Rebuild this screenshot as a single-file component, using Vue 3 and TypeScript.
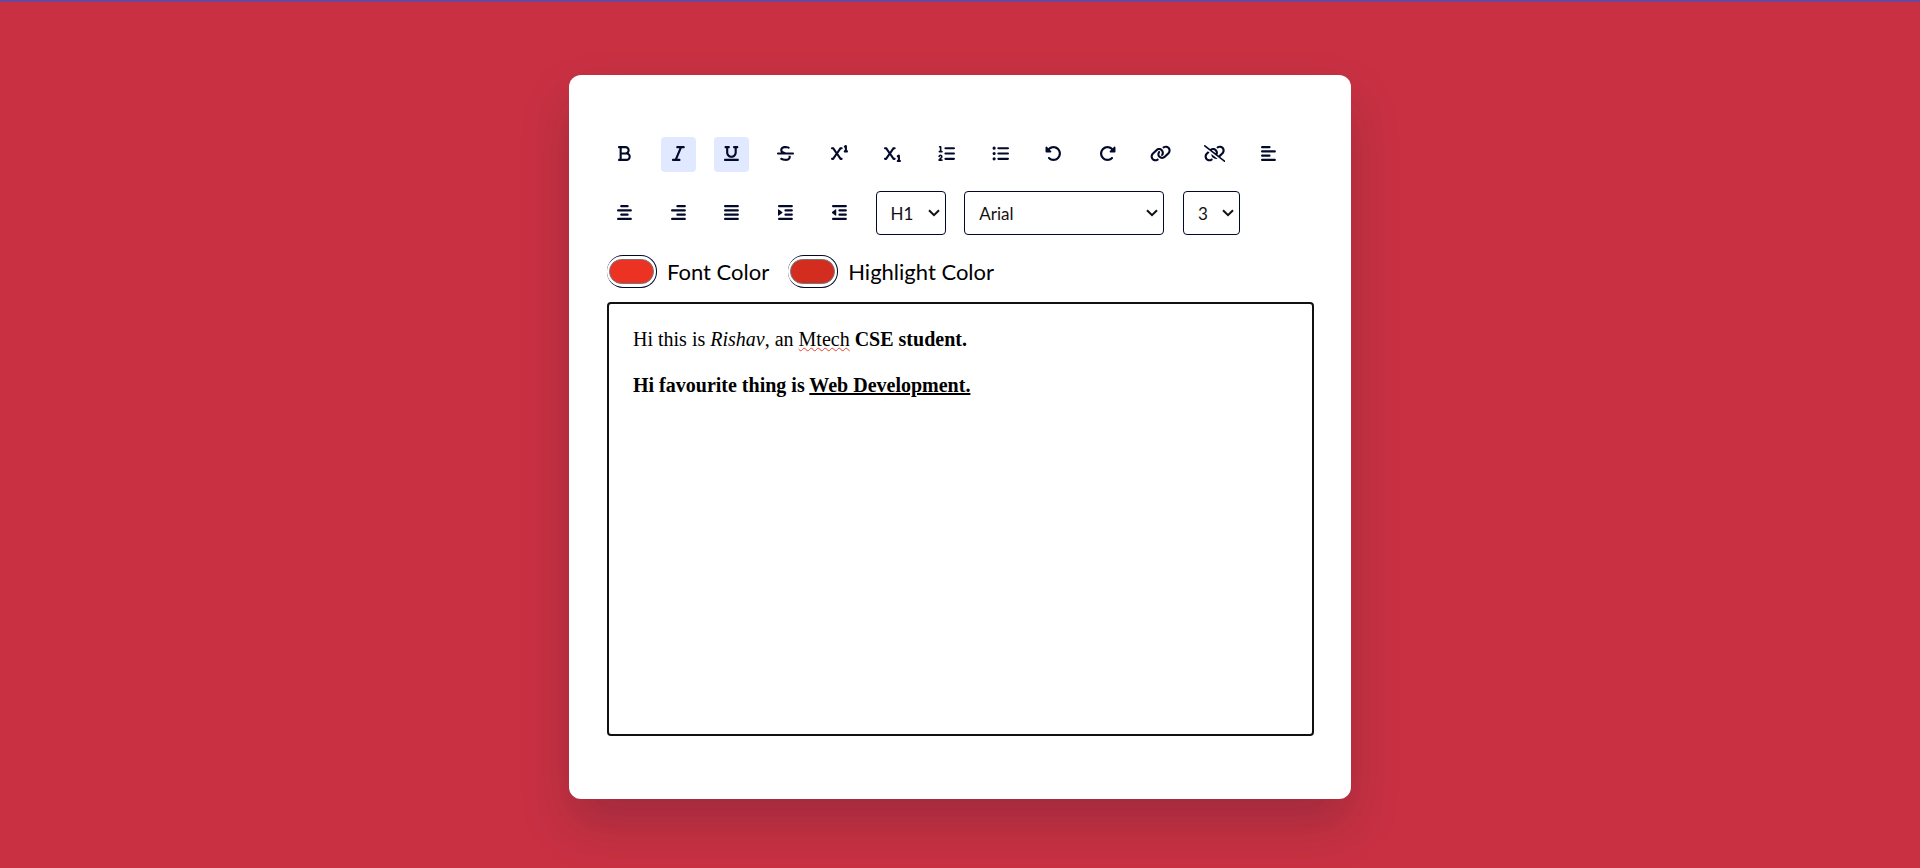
<script setup lang="ts">
import { ref } from 'vue'

interface Tool {
  id: string
  label: string
  width: number
  path: string
  flip?: boolean
}

const crossLetter =
  'M32 64C14.3 64 0 78.3 0 96s14.3 32 32 32H47.3l89.6 128L47.3 384H32c-17.7 0-32 14.3-32 32s14.3 32 32 32H64c10.4 0 20.2-5.1 26.2-13.6L176 311.8l85.8 122.6c6 8.6 15.8 13.6 26.2 13.6h32c17.7 0 32-14.3 32-32s-14.3-32-32-32H304.7L215.1 256l89.6-128H320c17.7 0 32-14.3 32-32s-14.3-32-32-32H288c-10.4 0-20.2 5.1-26.2 13.6L176 200.2 90.2 77.6C84.2 69.1 74.4 64 64 64H32z'
const smallOne =
  'c0-11.1-5.7-21.4-15.2-27.2s-21.2-6.4-31.1-1.4l-32 16c-15.8 7.9-22.2 27.1-14.3 42.9C393 '
const rotate =
  'M48.5 224H40c-13.3 0-24-10.7-24-24V72c0-9.7 5.8-18.5 14.8-22.2s19.3-1.7 26.2 5.2L98.6 96.6c87.6-86.5 228.7-86.2 315.8 1c87.5 87.5 87.5 229.3 0 316.8s-229.3 87.5-316.8 0c-12.5-12.5-12.5-32.8 0-45.3s32.8-12.5 45.3 0c62.5 62.5 163.8 62.5 226.3 0s62.5-163.8 0-226.3c-62.2-62.2-162.7-62.5-225.3-1L185 183c6.9 6.9 8.9 17.2 5.2 26.2s-12.5 14.8-22.2 14.8H48.5z'

// Rounded horizontal bar, 64 units thick, starting at (x, y)
const bar = (x: number, y: number, w: number): string =>
  `M${x + 32} ${y}h${w - 64}a32 32 0 0 1 0 64h-${w - 64}a32 32 0 0 1 0-64z`
const dot = (y: number): string => `M64 ${y - 48}a48 48 0 1 0 0 96a48 48 0 1 0 0-96z`
const listBars = bar(160, 64, 352) + bar(160, 224, 352) + bar(160, 384, 352)
const indentBars = bar(0, 32, 448) + bar(192, 160, 256) + bar(192, 288, 256) + bar(0, 416, 448)

const firstRow: Tool[] = [
  {
    id: 'bold',
    label: 'Bold',
    width: 384,
    path: 'M0 64C0 46.3 14.3 32 32 32H80 96 224c70.7 0 128 57.3 128 128c0 31.3-11.3 60.1-30 82.3c37.1 22.4 62 63.1 62 109.7c0 70.7-57.3 128-128 128H96 80 32c-17.7 0-32-14.3-32-32s14.3-32 32-32H48V256 96H32C14.3 96 0 81.7 0 64zM224 224c35.3 0 64-28.7 64-64s-28.7-64-64-64H112V224H224zM112 288V416H256c35.3 0 64-28.7 64-64s-28.7-64-64-64H224 112z'
  },
  {
    id: 'italic',
    label: 'Italic',
    width: 384,
    path: 'M128 64c0-17.7 14.3-32 32-32H352c17.7 0 32 14.3 32 32s-14.3 32-32 32H293.3L160 416h64c17.7 0 32 14.3 32 32s-14.3 32-32 32H32c-17.7 0-32-14.3-32-32s14.3-32 32-32H90.7L224 96H160c-17.7 0-32-14.3-32-32z'
  },
  {
    id: 'underline',
    label: 'Underline',
    width: 448,
    path: 'M16 64c0-17.7 14.3-32 32-32h96c17.7 0 32 14.3 32 32s-14.3 32-32 32H128V224c0 53 43 96 96 96s96-43 96-96V96H304c-17.7 0-32-14.3-32-32s14.3-32 32-32h96c17.7 0 32 14.3 32 32s-14.3 32-32 32H384V224c0 88.4-71.6 160-160 160s-160-71.6-160-160V96H48C30.3 96 16 81.7 16 64zM0 448c0-17.7 14.3-32 32-32H416c17.7 0 32 14.3 32 32s-14.3 32-32 32H32c-17.7 0-32-14.3-32-32z'
  },
  {
    id: 'strikethrough',
    label: 'Strikethrough',
    width: 512,
    path: 'M161.3 144c3.2-17.2 14-30.1 33.7-38.6c21.1-9 51.8-12.3 88.6-6.5c11.9 1.9 48.8 9.1 60.1 12c17.1 4.5 34.6-5.6 39.2-22.7s-5.6-34.6-22.7-39.2c-14.3-3.8-53.6-11.4-66.6-13.4c-44.7-7-88.3-4.2-123.7 10.9c-36.5 15.6-64.4 44.8-71.8 87.3c-.1 .6-.2 1.1-.2 1.7c-2.8 23.9 .5 45.6 10.1 64.6c4.5 9 10.2 16.9 16.7 23.9H32c-17.7 0-32 14.3-32 32s14.3 32 32 32H480c17.7 0 32-14.3 32-32s-14.3-32-32-32H270.1c-.1 0-.3-.1-.4-.1l-1.1-.3c-36-10.8-65.2-19.6-85.2-33.1c-9.3-6.3-15-12.6-18.2-19.1c-3.1-6.1-5.2-14.6-3.8-27.4zM348.9 337.2c2.7 6.5 4.4 15.8 1.9 30.1c-3 17.6-13.8 30.8-33.9 39.4c-21.1 9-51.7 12.3-88.5 6.5c-18-2.9-49.1-13.5-74.4-22.1c-5.6-1.9-11-3.7-15.9-5.4c-16.8-5.6-34.9 3.5-40.5 20.3s3.5 34.9 20.3 40.5c3.6 1.2 7.9 2.7 12.7 4.3c24.9 8.5 63.6 21.7 87.6 25.6l.2 0c44.7 7 88.3 4.2 123.7-10.9c36.5-15.6 64.4-44.8 71.8-87.3c3.6-21 2.7-40.4-3.1-58.1H335.1c7 5.6 11.4 11.2 13.9 17.2z'
  },
  {
    id: 'superscript',
    label: 'Superscript',
    width: 512,
    path: `M480 32${smallOne}73.5 404.3 80 416 80v80c-17.7 0-32 14.3-32 32s14.3 32 32 32h64c17.7 0 32-14.3 32-32s-14.3-32-32-32V32z${crossLetter}`
  },
  {
    id: 'subscript',
    label: 'Subscript',
    width: 512,
    path: `M480 320${smallOne}361.5 404.3 368 416 368v80c-17.7 0-32 14.3-32 32s14.3 32 32 32h64c17.7 0 32-14.3 32-32s-14.3-32-32-32V320z${crossLetter}`
  },
  {
    id: 'ordered',
    label: 'Ordered list',
    width: 512,
    path:
      'M24 56c0-13.3 10.7-24 24-24H80c13.3 0 24 10.7 24 24V176h16c13.3 0 24 10.7 24 24s-10.7 24-24 24H40c-13.3 0-24-10.7-24-24s10.7-24 24-24H56V80H48C34.7 80 24 69.3 24 56zM86.7 341.2c-6.5-7.4-18.3-6.9-24 1.2L51.5 357.9c-7.7 10.8-22.7 13.3-33.5 5.6s-13.3-22.7-5.6-33.5l11.1-15.6c23.7-33.2 72.3-35.6 99.2-4.9c21.3 24.4 20.8 60.9-1.1 84.7L86.8 432H120c13.3 0 24 10.7 24 24s-10.7 24-24 24H32c-9.5 0-18.2-5.6-22-14.4s-2.1-18.9 4.3-25.9l72-78c5.3-5.8 5.4-14.6 .3-20.5z' +
      bar(192, 64, 320) +
      bar(192, 224, 320) +
      bar(192, 384, 320)
  },
  { id: 'unordered', label: 'Unordered list', width: 512, path: dot(96) + dot(256) + dot(416) + listBars },
  { id: 'undo', label: 'Undo', width: 512, path: rotate },
  { id: 'redo', label: 'Redo', width: 512, path: rotate, flip: true },
  {
    id: 'link',
    label: 'Create link',
    width: 640,
    path: 'M579.8 267.7c56.5-56.5 56.5-148 0-204.5c-50-50-128.8-56.5-186.3-15.4l-1.6 1.1c-14.4 10.3-17.7 30.3-7.4 44.6s30.3 17.7 44.6 7.4l1.6-1.1c32.1-22.9 76-19.3 103.8 8.6c31.5 31.5 31.5 82.5 0 114L422.3 334.8c-31.5 31.5-82.5 31.5-114 0c-27.9-27.9-31.5-71.8-8.6-103.8l1.1-1.6c10.3-14.4 6.9-34.4-7.4-44.6s-34.4-6.9-44.6 7.4l-1.1 1.6C206.5 251.2 213 330 263 380c56.5 56.5 148 56.5 204.5 0L579.8 267.7zM60.2 244.3c-56.5 56.5-56.5 148 0 204.5c50 50 128.8 56.5 186.3 15.4l1.6-1.1c14.4-10.3 17.7-30.3 7.4-44.6s-30.3-17.7-44.6-7.4l-1.6 1.1c-32.1 22.9-76 19.3-103.8-8.6C74 372 74 321 105.5 289.5L217.7 177.2c31.5-31.5 82.5-31.5 114 0c27.9 27.9 31.5 71.8 8.6 103.9l-1.1 1.6c-10.3 14.4-6.9 34.4 7.4 44.6s34.4 6.9 44.6-7.4l1.1-1.6C433.5 260.8 427 182 377 132c-56.5-56.5-148-56.5-204.5 0L60.2 244.3z'
  },
  {
    id: 'unlink',
    label: 'Remove link',
    width: 640,
    path: 'M38.8 5.1C28.4-3.1 13.3-1.2 5.1 9.2S-1.2 34.7 9.2 42.9l592 464c10.4 8.2 25.5 6.3 33.7-4.1s6.3-25.5-4.1-33.7L489.3 358.2l90.5-90.5c56.5-56.5 56.5-148 0-204.5c-50-50-128.8-56.5-186.3-15.4l-1.6 1.1c-14.4 10.3-17.7 30.3-7.4 44.6s30.3 17.7 44.6 7.4l1.6-1.1c32.1-22.9 76-19.3 103.8 8.6c31.5 31.5 31.5 82.5 0 114l-96 96-31.9-25C430.9 239.6 420.1 175.1 377 132c-52.2-52.3-134.5-56.2-191.3-11.7L38.8 5.1zM239 162c30.1-14.9 67.7-9.9 92.8 15.3c20 20 27.5 48.3 21.7 74.5L239 162zM406.6 416.4L220.9 270c-2.1 39.8 12.2 80.1 42.2 110c38.9 38.9 94.4 51 143.6 36.3zm-290-228.5L60.2 244.3c-56.5 56.5-56.5 148 0 204.5c50 50 128.8 56.5 186.3 15.4l1.6-1.1c14.4-10.3 17.7-30.3 7.4-44.6s-30.3-17.7-44.6-7.4l-1.6 1.1c-32.1 22.9-76 19.3-103.8-8.6C74 372 74 321 105.5 289.5l61.8-61.8-50.6-39.9z'
  },
  {
    id: 'left',
    label: 'Align left',
    width: 448,
    path: bar(0, 32, 288) + bar(0, 160, 448) + bar(0, 288, 288) + bar(0, 416, 448)
  }
]

const secondRow: Tool[] = [
  {
    id: 'center',
    label: 'Align center',
    width: 448,
    path: bar(96, 32, 256) + bar(0, 160, 448) + bar(96, 288, 256) + bar(0, 416, 448)
  },
  {
    id: 'right',
    label: 'Align right',
    width: 448,
    path: bar(160, 32, 288) + bar(0, 160, 448) + bar(160, 288, 288) + bar(0, 416, 448)
  },
  {
    id: 'justify',
    label: 'Justify',
    width: 448,
    path: bar(0, 32, 448) + bar(0, 160, 448) + bar(0, 288, 448) + bar(0, 416, 448)
  },
  {
    id: 'indent',
    label: 'Indent',
    width: 448,
    path: indentBars + 'M127.8 268.6L25.8 347.9C15.3 356.1 0 348.6 0 335.3V176.7c0-13.3 15.3-20.8 25.8-12.6l102 79.3c8.2 6.4 8.2 18.8 0 25.2z'
  },
  {
    id: 'outdent',
    label: 'Outdent',
    width: 448,
    path: indentBars + 'M.2 268.6c-8.2-6.4-8.2-18.9 0-25.3l101.9-79.3c10.5-8.2 25.8-.7 25.8 12.6V335.3c0 13.3-15.3 20.8-25.8 12.6L.2 268.6z'
  }
]

const active = ref<string[]>(['italic', 'underline'])
const toggle = (id: string): void => {
  active.value = active.value.includes(id) ? active.value.filter((a) => a !== id) : [...active.value, id]
}

interface Choice {
  id: string
  label: string
  options: string[]
}

const choices: Choice[] = [
  { id: 'heading', label: 'Heading', options: ['H1', 'H2', 'H3', 'H4', 'H5', 'H6'] },
  {
    id: 'family',
    label: 'Font name',
    options: ['Arial', 'Verdana', 'Times New Roman', 'Garamond', 'Georgia', 'Courier New']
  },
  { id: 'size', label: 'Font size', options: ['1', '2', '3', '4', '5', '6', '7'] }
]
const chosen = ref<Record<string, string>>({ heading: 'H1', family: 'Arial', size: '3' })
const fontColor = ref('#ec3323')
const highlightColor = ref('#d32d1f')
</script>

<template>
  <main class="page">
    <section class="card">
      <div class="tools tools-first">
        <button
          v-for="tool in firstRow"
          :key="tool.id"
          type="button"
          class="tool"
          :class="{ active: active.includes(tool.id) }"
          :aria-label="tool.label"
          @click="toggle(tool.id)"
        >
          <svg class="icon" :class="{ flip: tool.flip }" :viewBox="`0 0 ${tool.width} 512`" aria-hidden="true">
            <path :d="tool.path" />
          </svg>
        </button>
      </div>
      <div class="tools tools-second">
        <button
          v-for="tool in secondRow"
          :key="tool.id"
          type="button"
          class="tool"
          :class="{ active: active.includes(tool.id) }"
          :aria-label="tool.label"
          @click="toggle(tool.id)"
        >
          <svg class="icon" :viewBox="`0 0 ${tool.width} 512`" aria-hidden="true">
            <path :d="tool.path" />
          </svg>
        </button>
        <div v-for="choice in choices" :key="choice.id" class="choice" :class="choice.id">
          <select v-model="chosen[choice.id]" :aria-label="choice.label">
            <option v-for="option in choice.options" :key="option" :value="option">{{ option }}</option>
          </select>
          <svg class="chevron" viewBox="0 0 12 8" aria-hidden="true">
            <path d="M1 1.2L6 6.2L11 1.2" />
          </svg>
        </div>
      </div>
      <div class="colors">
        <div class="color">
          <input id="fontColor" v-model="fontColor" type="color" />
          <label for="fontColor">Font Color</label>
        </div>
        <div class="color">
          <input id="highlightColor" v-model="highlightColor" type="color" />
          <label for="highlightColor">Highlight Color</label>
        </div>
      </div>
      <div class="editor" contenteditable="true" role="textbox" aria-label="Text" aria-multiline="true">
        <div>Hi this is <i>Rishav</i>, an <span class="misspelt">Mtech</span> <b>CSE student.</b></div>
        <div><br /></div>
        <div><b>Hi favourite thing is <u>Web Development.</u></b></div>
      </div>
    </section>
  </main>
</template>

<style>
body {
  margin: 0;
}
</style>

<style scoped>
.page {
  box-sizing: border-box;
  min-height: 100vh;
  padding: 73px 16px 69px;
  border-top: 2px solid #6a479c;
  background: #c93143;
  font-family: Lato, 'Open Sans', sans-serif;
}
.card {
  box-sizing: border-box;
  width: 782px;
  max-width: 100%;
  margin: 0 auto;
  padding: 62px 37px 63px 38px;
  border-radius: 12px;
  background: #fff;
  box-shadow: 0 25px 50px rgba(7, 20, 35, 0.2);
}
.tools {
  display: flex;
  align-items: center;
  justify-content: space-between;
  margin-bottom: 19px;
}
.tools-first {
  padding-right: 28px;
}
.tools-second {
  padding-right: 74px;
}
.tool {
  display: flex;
  align-items: center;
  justify-content: center;
  box-sizing: border-box;
  width: 35px;
  height: 35px;
  padding: 0 0 2px;
  border: 0;
  border-radius: 4px;
  background: #fff;
  color: #020929;
  cursor: pointer;
}
.tool.active {
  background: #e0e9ff;
}
.icon {
  height: 17px;
  fill: currentColor;
}
.flip {
  transform: scaleX(-1);
}
.choice {
  display: grid;
  align-items: center;
}
.choice > * {
  grid-area: 1 / 1;
}
.choice select {
  box-sizing: border-box;
  appearance: none;
  width: 100%;
  height: 44px;
  padding: 0 20px 0 14px;
  border: 1px solid #020929;
  border-radius: 4px;
  background: #fff;
  color: #111;
  font-family: inherit;
  font-size: 17px;
}
.chevron {
  justify-self: end;
  width: 12px;
  height: 8px;
  margin-right: 6px;
  fill: none;
  stroke: #111;
  stroke-width: 2;
  pointer-events: none;
}
.heading {
  width: 70px;
}
.family {
  width: 200px;
}
.size {
  width: 57px;
}
.colors {
  display: flex;
  gap: 19px;
  padding-top: 1px;
  margin-bottom: 14px;
}
.color {
  display: flex;
  align-items: center;
  gap: 10px;
  color: #000;
  font-size: 22px;
  line-height: 33px;
}
input[type='color'] {
  box-sizing: border-box;
  appearance: none;
  width: 50px;
  height: 33px;
  padding: 0;
  border: 1px solid #020929;
  border-left: 0;
  border-radius: 16px;
  background: transparent;
  cursor: pointer;
}
input[type='color']::-webkit-color-swatch-wrapper {
  padding: 3px 2px;
}
input[type='color']::-webkit-color-swatch {
  border: 1px solid #777;
  border-radius: 15px;
}
.editor {
  box-sizing: border-box;
  height: 50vh;
  padding: 24px;
  border: 2px solid #111;
  border-radius: 4px;
  background: #fff;
  color: #000;
  font-family: 'Liberation Serif', serif;
  font-size: 20px;
  line-height: 23px;
  outline: none;
}
.misspelt {
  text-decoration: underline wavy #e8402f 1px;
}
</style>
